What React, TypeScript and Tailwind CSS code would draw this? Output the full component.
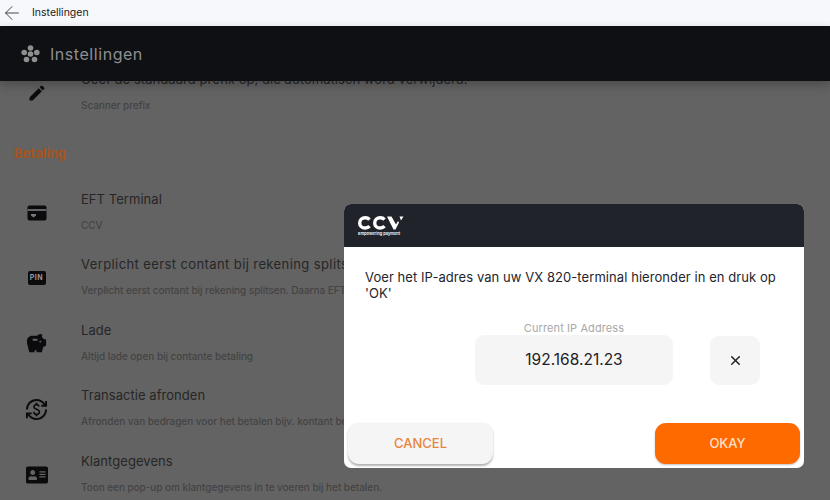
import { ArrowLeft, X } from 'lucide-react'
import { MdEdit, MdSavings, MdCurrencyExchange } from 'react-icons/md'
import { FaAddressCard } from 'react-icons/fa'
import type { ReactNode } from 'react'

const font = "font-['Inter','Noto_Sans',sans-serif]"

function SettingRow({ icon, title, sub, wide }: { icon: ReactNode; title: string; sub: string; wide?: boolean }) {
  return (
    <div className="flex h-[65.5px] items-center">
      <div className="flex w-[81px] shrink-0 justify-center pr-[8px] pt-[3px] text-[#0b0b0d]">{icon}</div>
      <div className="flex flex-col gap-[13px] whitespace-nowrap">
        <div className={`text-[13px] leading-[14px] text-[#262626] ${wide ? 'tracking-[0.4px]' : 'tracking-[0.05px]'}`}>
          {title}
        </div>
        <div className="text-[10px] leading-[12px] font-medium tracking-[-0.05px] text-[#434343]">{sub}</div>
      </div>
    </div>
  )
}

function Flower() {
  return (
    <svg width="19" height="18" viewBox="0 0 19 18" fill="#8f8f8f">
      <circle cx="9.500" cy="3" r="2.800" />
      <circle cx="3.200" cy="7.500" r="2.800" />
      <circle cx="15.800" cy="7.500" r="2.800" />
      <circle cx="9.500" cy="9" r="2.800" />
      <circle cx="5.500" cy="14.500" r="2.800" />
      <circle cx="13.500" cy="14.500" r="2.800" />
    </svg>
  )
}

function CardIcon() {
  return (
    <svg width="20" height="16" viewBox="0 0 20 16">
      <rect x="0.500" y="0.500" width="19" height="15" rx="2" fill="#0b0b0d" />
      <rect x="0.500" y="4" width="19" height="2" fill="#636363" />
      <path d="M4 9h5v1.500L6.500 12.500 4 10.500Z" fill="#7a7a7a" />
    </svg>
  )
}

function CcvLogo() {
  return (
    <svg width="46" height="14" viewBox="0 0 46 14" fill="none" stroke="#ffffff" strokeWidth="3.400">
      <path d="M11.500 3.600C10.500 2.400 9 1.800 7.200 1.800 3.900 1.800 1.700 3.800 1.700 6.900s2.200 5.100 5.500 5.100c1.800 0 3.300-.6 4.300-1.800" />
      <path d="M26.500 3.600C25.500 2.400 24 1.800 22.200 1.800c-3.300 0-5.500 2-5.500 5.100s2.200 5.100 5.500 5.100c1.800 0 3.300-.6 4.300-1.800" />
      <path d="M29 0.500H33.500L38 8.500 40 5 41 6.500 37.500 13.500H35.500Z" fill="#ffffff" stroke="none" />
      <path d="M41.500 0.500H45.500L43 4.500Z" fill="#ffffff" stroke="none" />
    </svg>
  )
}

export default function App() {
  return (
    <div className={`relative flex h-[500px] w-[830px] flex-col overflow-hidden bg-[#636363] ${font}`}>
      {/* Window title bar */}
      <div className="flex h-[26px] shrink-0 items-center bg-[#f7f8fb] pl-[1px]">
        <ArrowLeft size={22} strokeWidth={0.9} className="text-[#222222]" />
        <span className="ml-[9px] text-[10.500px] text-[#1a1a1a]">Instellingen</span>
      </div>

      {/* App header */}
      <div className="relative z-10 flex h-[55px] shrink-0 items-center gap-[10px] bg-[#0e1014] pl-[21px] shadow-[0_4px_10px_rgba(0,0,0,0.25)]">
        <Flower />
        <span className="text-[16px] tracking-[0.55px] text-[#8f8f8f]">Instellingen</span>
      </div>

      {/* Settings list */}
      <div className="-mt-[22px] flex-1 overflow-hidden">
        <SettingRow
          icon={<MdEdit size={20} />}
          title="Geef de standaard prefix op, die automatisch word verwijderd."
          sub="Scanner prefix"
        />
        <div className="flex h-[54px] items-center pl-[14px] pt-[5px] text-[13px] font-bold text-[#a6541c]">Betaling</div>
        <SettingRow icon={<CardIcon />} title="EFT Terminal" sub="CCV" />
        <SettingRow
          icon={
            <div className="flex h-[14px] w-[18px] items-center justify-center rounded-[2px] bg-[#0b0b0d] text-[7px] font-bold tracking-[0.5px] text-[#9a9a9a]">
              PIN
            </div>
          }
          title="Verplicht eerst contant bij rekening splitsen"
          sub="Verplicht eerst contant bij rekening splitsen. Daarna EFT"
          wide
        />
        <SettingRow icon={<MdSavings size={23} />} title="Lade" sub="Altijd lade open bij contante betaling" />
        <SettingRow
          icon={<MdCurrencyExchange size={23} />}
          title="Transactie afronden"
          sub="Afronden van bedragen voor het betalen bijv. kontant betalen"
        />
        <SettingRow
          icon={<FaAddressCard size={22} />}
          title="Klantgegevens"
          sub="Toon een pop-up om klantgegevens in te voeren bij het betalen."
        />
      </div>

      {/* Dialog */}
      <div className="absolute left-[344px] top-[204px] z-20 flex h-[264px] w-[460px] flex-col overflow-hidden rounded-[7px] bg-white">
        <div className="flex h-[43px] shrink-0 flex-col justify-center gap-[1px] bg-[#20232a] pl-[14px]">
          <CcvLogo />
          <span className="text-[4px] leading-[5px] font-semibold text-white">Empowering payment</span>
        </div>
        <div className="px-[21px] pt-[22px] text-[13px] leading-[16px] tracking-[0.07px] text-[#23252c]">
          Voer het IP-adres van uw VX 820-terminal hieronder in en druk op 'OK'
        </div>
        <div className="mt-[20px] flex items-start pl-[131px]">
          <div className="flex flex-col items-center">
            <span className="text-[11px] leading-[14px] tracking-[0.1px] text-[#a8a8a8]">Current IP Address</span>
            <div className="flex h-[50px] w-[198px] items-center justify-center rounded-[9px] bg-[#f5f5f5] text-[15.500px] text-[#1f2128]">
              192.168.21.23
            </div>
          </div>
          <div className="ml-[37px] mt-[15px] flex h-[49px] w-[50px] items-center justify-center rounded-[9px] bg-[#f5f5f5] text-[#1f2128]">
            <X size={15} strokeWidth={2.400} />
          </div>
        </div>
        <div className="mt-auto flex items-center justify-between px-[4px] pb-[4px]">
          <button className="h-[41px] w-[145px] rounded-[11px] bg-[#f5f5f5] text-[13px] font-medium text-[#e8853c] shadow-[0_1.500px_2px_rgba(0,0,0,0.3)]">
            CANCEL
          </button>
          <button className="h-[41px] w-[145px] rounded-[11px] bg-[#ff6a00] text-[13px] font-medium text-[#fde0c8] shadow-[0_1px_2px_rgba(0,0,0,0.25)]">
            OKAY
          </button>
        </div>
      </div>
    </div>
  )
}
